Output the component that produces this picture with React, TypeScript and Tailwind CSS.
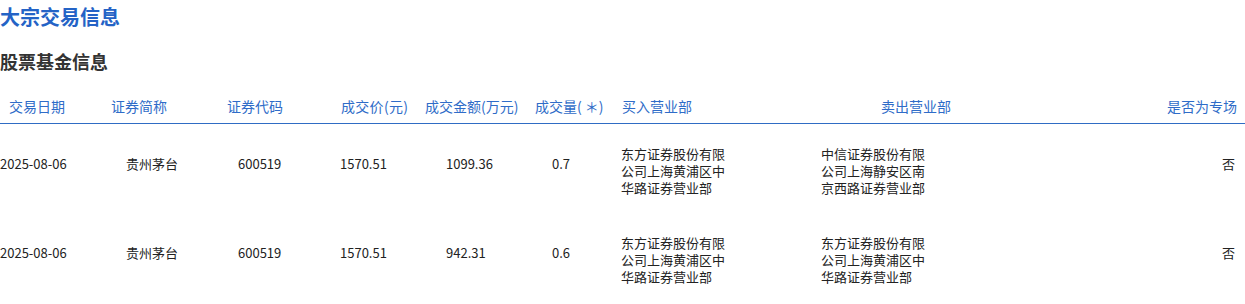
const rows = [
  {
    date: "2025-08-06",
    name: "贵州茅台",
    code: "600519",
    price: "1570.51",
    amount: "1099.36",
    volume: "0.7",
    buyer: "东方证券股份有限公司上海黄浦区中华路证券营业部",
    seller: "中信证券股份有限公司上海静安区南京西路证券营业部",
    special: "否",
  },
  {
    date: "2025-08-06",
    name: "贵州茅台",
    code: "600519",
    price: "1570.51",
    amount: "942.31",
    volume: "0.6",
    buyer: "东方证券股份有限公司上海黄浦区中华路证券营业部",
    seller: "东方证券股份有限公司上海黄浦区中华路证券营业部",
    special: "否",
  },
];

const gridCols = "grid grid-cols-[96px_114px_110px_98px_109px_85px_188px_200px_245px]";

export default function App() {
  return (
    <div
      className="w-[1245px] h-[304px] bg-white overflow-hidden"
      style={{ fontFamily: '"Noto Sans CJK SC", "Noto Sans", sans-serif' }}
    >
      <h1 className="pt-[3px] text-[20px] leading-[28px] font-bold text-[#2463c6]">大宗交易信息</h1>
      <h2 className="mt-[16px] text-[18px] leading-[28px] font-bold text-[#333333]">股票基金信息</h2>

      {/* header */}
      <div className={`${gridCols} mt-[21px] pb-[7px] border-b border-[#2f6cc4] text-[14px] leading-[20px] text-[#2f6cc8]`}>
        <div className="pl-[9px]">交易日期</div>
        <div className="pl-[15px]">证券简称</div>
        <div className="pl-[17px]">证券代码</div>
        <div className="pl-[21px] tracking-[0.3px]">成交价(元)</div>
        <div className="pl-[7px]">成交金额(万元)</div>
        <div className="pl-[8px]">成交量( ＊)</div>
        <div className="pl-[10px]">买入营业部</div>
        <div className="pl-[81px]">卖出营业部</div>
        <div className="pr-[8px] text-right">是否为专场</div>
      </div>

      {/* body */}
      {rows.map((r, i) => (
        <div key={i} className={`${gridCols} h-[89px] text-[13px] leading-[17px] text-[#222222]`}>
          <div className="pt-[31px]">{r.date}</div>
          <div className="pt-[31px] pl-[30px]">{r.name}</div>
          <div className="pt-[31px] pl-[28px]">{r.code}</div>
          <div className="pt-[31px] pl-[20px]">{r.price}</div>
          <div className="pt-[31px] pl-[28px]">{r.amount}</div>
          <div className="pt-[31px] pl-[25px]">{r.volume}</div>
          <div className="pt-[21px] pl-[9px]">
            <div className="w-[106px]">{r.buyer}</div>
          </div>
          <div className="pt-[21px] pl-[21px]">
            <div className="w-[106px]">{r.seller}</div>
          </div>
          <div className="pt-[31px] pr-[10px] text-right">{r.special}</div>
        </div>
      ))}
    </div>
  );
}
